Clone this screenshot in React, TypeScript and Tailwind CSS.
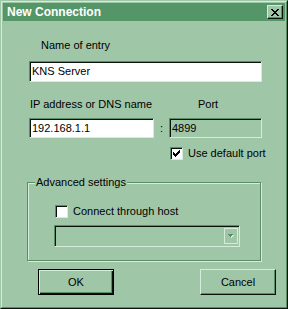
import React from "react";

// classic dialog palette, green scheme
const sunken =
  "border border-t-[#5C8C68] border-l-[#5C8C68] border-r-[#D6ECDA] border-b-[#D6ECDA] shadow-[inset_1px_1px_0_#0A140C]";

const CheckBox = ({ checked }: { checked: boolean }) => (
  <div className={`w-[13px] h-[13px] bg-white flex items-center justify-center ${sunken}`}>
    {checked && (
      <svg width="7" height="7" viewBox="0 0 7 7" shapeRendering="crispEdges">
        <path
          d="M6 0h1v1h-1zM5 1h2v1h-2zM0 2h1v1h-1zM4 2h3v1h-3zM0 3h2v1h-2zM3 3h3v1h-3zM0 4h5v1h-5zM1 5h3v1h-3zM2 6h1v1h-1z"
          fill="#000"
        />
      </svg>
    )}
  </div>
);

const Button = ({ label, isDefault }: { label: string; isDefault?: boolean }) => (
  <button
    className={
      isDefault
        ? "w-[76px] h-[26px] border border-black bg-[#A0C6A8] shadow-[inset_1px_1px_0_#D6ECDA,inset_-1px_-1px_0_#0A140C,inset_-2px_-2px_0_#5C8C68] text-[11px] text-black flex items-center justify-center"
        : "w-[76px] h-[26px] border border-t-[#D6ECDA] border-l-[#D6ECDA] border-r-[#0A140C] border-b-[#0A140C] bg-[#A0C6A8] shadow-[inset_-1px_-1px_0_#5C8C68] text-[11px] text-black flex items-center justify-center"
    }
  >
    {label}
  </button>
);

export default function App() {
  return (
    <div
      className="w-[288px] h-[309px] bg-[#A0C6A8] border border-t-[#A0C6A8] border-l-[#A0C6A8] border-r-[#0A140C] border-b-[#0A140C] text-black"
      style={{ fontFamily: '"Liberation Sans", Arial, sans-serif' }}
    >
      <div className="w-full h-full border border-t-[#D6ECDA] border-l-[#D6ECDA] border-r-[#5C8C68] border-b-[#5C8C68] p-px">
        {/* title bar */}
        <div className="h-[18px] bg-[#549668] flex items-center justify-between pl-[4px] pr-[2px]">
          <span className="text-[12px] font-bold text-white leading-[18px]">New Connection</span>
          <div className="w-[16px] h-[14px] bg-[#A0C6A8] border border-t-[#D6ECDA] border-l-[#D6ECDA] border-r-[#0A140C] border-b-[#0A140C] shadow-[inset_-1px_-1px_0_#5C8C68] flex items-center justify-center">
            <svg width="8" height="7" viewBox="0 0 8 7" shapeRendering="crispEdges">
              <path
                d="M0 0h2v1h-2zM6 0h2v1h-2zM1 1h2v1h-2zM5 1h2v1h-2zM2 2h4v1h-4zM3 3h2v1h-2zM2 4h4v1h-4zM1 5h2v1h-2zM5 5h2v1h-2zM0 6h2v1h-2zM6 6h2v1h-2z"
                fill="#000"
              />
            </svg>
          </div>
        </div>

        {/* body */}
        <div className="text-[11px] leading-[13px]">
          <div className="mt-[18px] ml-[38px]">Name of entry</div>
          <div className={`mt-[9px] ml-[26px] w-[233px] h-[21px] bg-white flex items-center pl-[2px] ${sunken}`}>
            KNS Server
          </div>

          <div className="mt-[16px] flex">
            <span className="ml-[27px] w-[168px]">IP address or DNS name</span>
            <span>Port</span>
          </div>
          <div className="mt-[7px] flex items-center">
            <div className={`ml-[26px] w-[125px] h-[20px] bg-white flex items-center pl-[2px] ${sunken}`}>
              192.168.1.1
            </div>
            <span className="w-[15px] text-center">:</span>
            <div className={`w-[93px] h-[20px] bg-[#A0C6A8] flex items-center pl-[2px] ${sunken}`}>4899</div>
          </div>

          <div className="mt-[9px] ml-[167px] flex items-center gap-[5px]">
            <CheckBox checked />
            <span>Use default port</span>
          </div>

          {/* group box */}
          <div className="relative mt-[22px] ml-[24px] w-[234px] h-[79px] border border-[#5C8C68] shadow-[inset_1px_1px_0_#D6ECDA,1px_1px_0_#D6ECDA]">
            <span className="absolute left-[7px] top-[-7px] px-[1px] bg-[#A0C6A8]">Advanced settings</span>
            <div className="mt-[22px] ml-[27px] flex items-center gap-[5px]">
              <CheckBox checked={false} />
              <span>Connect through host</span>
            </div>
            <div className={`mt-[7px] ml-[26px] w-[186px] h-[22px] bg-[#A0C6A8] flex justify-end items-center pr-px ${sunken}`}>
              <div className="w-[14px] h-[16px] border border-[#D6ECDA] flex items-center justify-center">
                <svg width="6" height="4" viewBox="0 0 6 4" shapeRendering="crispEdges">
                  <path d="M1 1h5v1h-5zM2 2h3v1h-3zM3 3h1v1h-1z" fill="#D6ECDA" />
                  <path d="M0 0h5v1h-5zM1 1h3v1h-3zM2 2h1v1h-1z" fill="#5C8C68" />
                </svg>
              </div>
            </div>
          </div>

          <div className="mt-[8px] ml-[35px] flex gap-[86px]">
            <Button label="OK" isDefault />
            <Button label="Cancel" />
          </div>
        </div>
      </div>
    </div>
  );
}
